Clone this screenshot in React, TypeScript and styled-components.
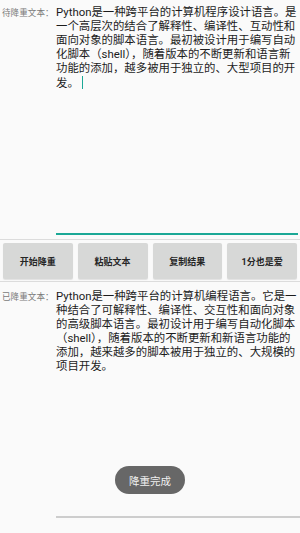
import styled, { createGlobalStyle } from 'styled-components';

const GlobalStyle = createGlobalStyle`
	html, body {
		margin: 0;
		padding: 0;
		background: #fafafa;
	}
	body {
		font-family: Roboto, "Noto Sans CJK SC", sans-serif;
	}
`;

const Screen = styled.div`
	position: relative;
	display: flex;
	flex-direction: column;
	width: 300px;
	height: 533px;
	background: #fafafa;
	overflow: hidden;
`;

const InputRow = styled.div`
	display: flex;
	height: 239px;
	box-sizing: border-box;
	padding: 6px 2px 4px 0;
`;

const OutputRow = styled.div`
	display: flex;
	flex: 1;
	min-height: 0;
	padding: 8px 0 15px 0;
`;

const FieldLabel = styled.div`
	width: 56px;
	flex-shrink: 0;
	padding: 2px 0 0 2px;
	box-sizing: border-box;
	font-family: Roboto, "Noto Sans CJK SC", sans-serif;
	font-size: 8.6px;
	line-height: 10px;
	color: #7a7a7a;
	white-space: nowrap;
`;

const Field = styled.div<{ $focused?: boolean }>`
	flex: 1;
	border-bottom: ${(p) => (p.$focused ? '2px solid #1ba896' : '2px solid #cdcdcd')};
	font-family: Roboto, "Noto Sans CJK SC", sans-serif;
	font-size: 11.4px;
	line-height: 13.9px;
	color: #1c1c1c;
	word-break: break-all;
`;

const Caret = styled.span`
	display: inline-block;
	width: 1.5px;
	height: 13px;
	margin-left: 3px;
	vertical-align: -2px;
	background: #1ba896;
`;

const Divider = styled.div`
	height: 1px;
	background: #dcdcdc;
`;

const ButtonBar = styled.div`
	display: grid;
	grid-template-columns: repeat(4, 1fr);
	gap: 5px;
	padding: 3px 3px 2px 3px;
`;

const ActionButton = styled.button`
	height: 36px;
	border: none;
	border-radius: 2px;
	background: #d7d8d7;
	box-shadow: 0 1px 1px rgba(0, 0, 0, 0.1);
	font-family: Roboto, "Noto Sans CJK SC", sans-serif;
	font-size: 9px;
	font-weight: bold;
	color: #262626;
	padding: 0;
`;

const Toast = styled.div`
	position: absolute;
	left: 115px;
	top: 466px;
	width: 70px;
	height: 28px;
	border-radius: 14px;
	background: #676767;
	color: #f0f0f0;
	font-family: Roboto, "Noto Sans CJK SC", sans-serif;
	font-size: 10.5px;
	display: flex;
	align-items: center;
	justify-content: center;
`;

const buttons = ['开始降重', '粘贴文本', '复制结果', '1分也是爱'];

const App = () => {
	return (
		<Screen>
			<GlobalStyle />
			<InputRow>
				<FieldLabel>待降重文本：</FieldLabel>
				<Field $focused>
					Python是一种跨平台的计算机程序设计语言。是一个高层次的结合了解释性、编译性、互动性和面向对象的脚本语言。最初被设计用于编写自动化脚本（shell），随着版本的不断更新和语言新功能的添加，越多被用于独立的、大型项目的开发。
					<Caret />
				</Field>
			</InputRow>
			<Divider />
			<ButtonBar>
				{buttons.map((b) => (
					<ActionButton key={b}>{b}</ActionButton>
				))}
			</ButtonBar>
			<Divider />
			<OutputRow>
				<FieldLabel>已降重文本：</FieldLabel>
				<Field>
					Python是一种跨平台的计算机编程语言。它是一种结合了可解释性、编译性、交互性和面向对象的高级脚本语言。最初设计用于编写自动化脚本（shell），随着版本的不断更新和新语言功能的添加，越来越多的脚本被用于独立的、大规模的项目开发。
				</Field>
			</OutputRow>
			<Toast>降重完成</Toast>
		</Screen>
	);
};

export default App;
